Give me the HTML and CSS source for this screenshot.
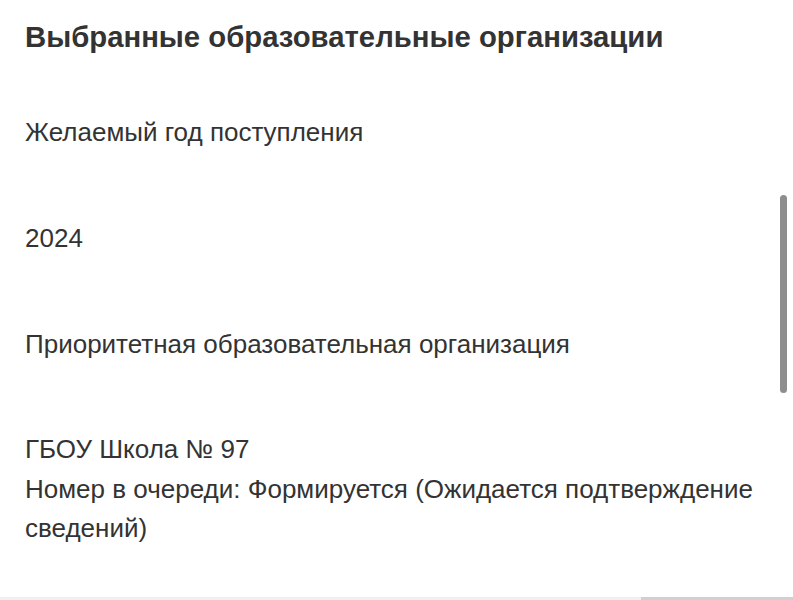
FILE: index.html
```html
<!DOCTYPE html>
<html lang="ru">
<head>
<meta charset="utf-8">
<link rel="stylesheet" href="styles.css">
</head>
<body>
<main class="page">
  <h1 class="title">Выбранные образовательные организации</h1>
  <section class="field first">
    <p class="label">Желаемый год поступления</p>
  </section>
  <section class="field">
    <p class="value">2024</p>
  </section>
  <section class="field">
    <p class="label">Приоритетная образовательная организация</p>
  </section>
  <section class="field org">
    <p class="org-name">ГБОУ Школа № 97</p>
    <p class="org-queue">Номер в очереди: Формируется (Ожидается подтверждение сведений)</p>
  </section>
</main>
<div class="scroll-thumb"></div>
<div class="bottom-bar"><div class="bottom-track"></div><div class="bottom-thumb"></div></div>
</body>
</html>
```
FILE: styles.css
```css
html, body {
  margin: 0;
  padding: 0;
  background: #ffffff;
  height: 600px;
  overflow: hidden;
}
body {
  font-family: "Liberation Sans", Arial, sans-serif;
  color: #333333;
}
.page {
  padding: 20px 25px 0 25px;
  width: 740px;
}
.title {
  margin: 0;
  font-size: 29.3px;
  font-weight: bold;
  line-height: 34px;
}
.field {
  margin-top: 68px;
}
.field.first {
  margin-top: 59px;
}
.field.org {
  margin-top: 67px;
}
.field p {
  margin: 0;
  font-size: 26px;
  line-height: 38px;
}
.org p {
  line-height: 39.5px;
}
.scroll-thumb {
  position: absolute;
  left: 780px;
  top: 195px;
  width: 7px;
  height: 198px;
  border-radius: 4px;
  background: #8e8e8e;
}
.bottom-bar {
  position: absolute;
  left: 0;
  top: 597px;
  width: 793px;
  height: 3px;
  display: flex;
}
.bottom-track {
  width: 641px;
  background: #f0f0f0;
}
.bottom-thumb {
  flex: 1;
  background: #d0d0d0;
}
```
